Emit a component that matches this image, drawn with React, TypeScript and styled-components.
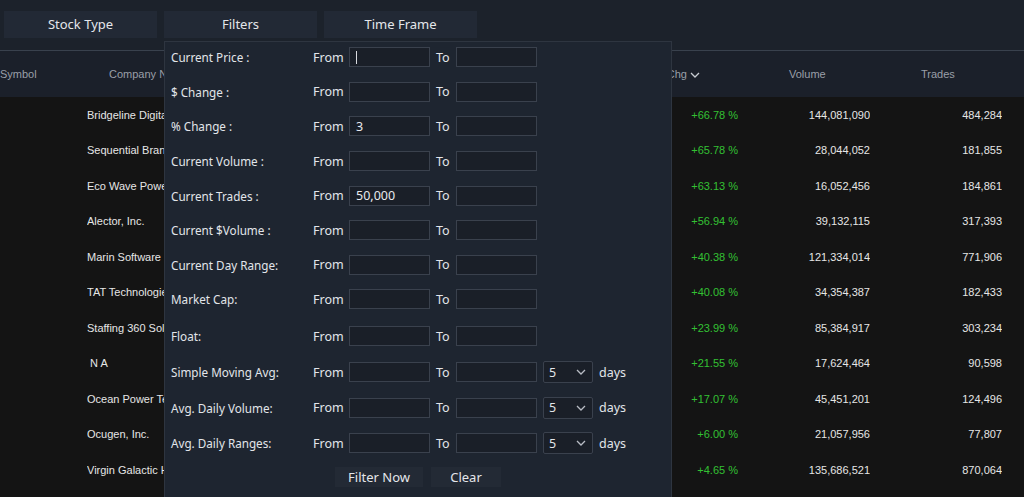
import React from "react";
import styled, { createGlobalStyle } from "styled-components";

const Global = createGlobalStyle`
  html, body { margin: 0; padding: 0; background: #141414; }
  body { width: 1024px; height: 497px; overflow: hidden; font-family: "Liberation Sans", Arial, sans-serif; }
  * { box-sizing: border-box; }
`;

const Page = styled.div`
  position: relative;
  width: 1024px;
  height: 497px;
  overflow: hidden;
  background: #141414;
`;

const TopBar = styled.div`
  display: flex;
  gap: 7px;
  height: 51px;
  padding: 11px 0 0 4px;
  background: #1c222b;
  border-bottom: 1px solid #39414d;
`;

const Tab = styled.div`
  width: 153px;
  height: 27px;
  display: flex;
  align-items: center;
  justify-content: center;
  padding-bottom: 2px;
  background: #222935;
  color: #e4e6ea;
  font-family: "Noto Sans", sans-serif;
  font-size: 13px;
`;

const COLS = "87px 77px 393px 181px 132px 132px 22px";

const HeaderRow = styled.div`
  display: grid;
  grid-template-columns: ${COLS};
  height: 46px;
  align-items: center;
  background: #1b202a;
  color: #9a9fa8;
  font-size: 11px;
`;

const HeadCell = styled.div<{ $align?: string; $pl?: number; $pr?: number }>`
  text-align: ${(p) => p.$align || "left"};
  padding-left: ${(p) => p.$pl || 0}px;
  padding-right: ${(p) => p.$pr || 0}px;
  white-space: nowrap;
  overflow: hidden;
`;

const Body = styled.div`
  background: #141414;
`;

const Row = styled.div`
  display: grid;
  grid-template-columns: ${COLS};
  height: 35.5px;
  align-items: center;
  font-size: 11px;
`;

const Cell = styled.div<{ $align?: string; $green?: boolean }>`
  text-align: ${(p) => p.$align || "left"};
  color: ${(p) => (p.$green ? "#33c033" : "#e6e6e6")};
  white-space: nowrap;
  overflow: hidden;
`;

const Panel = styled.div`
  position: absolute;
  left: 164px;
  top: 41px;
  width: 508px;
  height: 470px;
  background: #1e2530;
  border: 1px solid #2e3540;
  padding: 0 0 0 6px;
  font-family: "Noto Sans", sans-serif;
  font-size: 11.7px;
  color: #e2e5ea;
`;

const FormList = styled.div`
  margin-top: -2px;
`;

const FRow = styled.div<{ $h?: number; $mt?: number }>`
  display: flex;
  align-items: center;
  height: ${(p) => p.$h || 34.6}px;
  margin-top: ${(p) => p.$mt || 0}px;
`;

const Label = styled.div`
  width: 142px;
  white-space: nowrap;
`;

const Word = styled.span<{ $w: number }>`
  width: ${(p) => p.$w}px;
  font-size: 12.5px;
`;

const Input = styled.div`
  width: 81px;
  height: 20px;
  background: #1a1f28;
  border: 1px solid #3a414d;
  margin-right: 6px;
  display: flex;
  align-items: center;
  padding-left: 6px;
  font-size: 12.5px;
  color: #e8eaee;
`;

const Caret = styled.span`
  width: 1px;
  height: 13px;
  background: #d8dadf;
`;

const Select = styled.div`
  width: 50px;
  height: 22px;
  background: #1a1f28;
  border: 1px solid #3a414d;
  border-radius: 2px;
  display: flex;
  align-items: center;
  justify-content: space-between;
  padding: 0 6px 0 5px;
  margin-right: 6px;
  font-size: 12.5px;
`;

const Buttons = styled.div`
  display: flex;
  justify-content: center;
  gap: 8px;
  padding-right: 6px;
  height: 33px;
  align-items: center;
`;

const Btn = styled.div<{ $w: number }>`
  width: ${(p) => p.$w}px;
  height: 20px;
  background: #232a35;
  display: flex;
  align-items: center;
  justify-content: center;
  font-size: 13px;
  color: #e4e6ea;
`;

const Chevron = ({ size = 10, color = "#c8ccd2" }: { size?: number; color?: string }) => (
  <svg width={size} height={size * 0.6} viewBox="0 0 10 6" fill="none">
    <path d="M1 1l4 4 4-4" stroke={color} strokeWidth="1.3" />
  </svg>
);

const rows = [
  ["Bridgeline Digital, Inc.", "+66.78 %", "144,081,090", "484,284"],
  ["Sequential Brands Group", "+65.78 %", "28,044,052", "181,855"],
  ["Eco Wave Power Global", "+63.13 %", "16,052,456", "184,861"],
  ["Alector, Inc.", "+56.94 %", "39,132,115", "317,393"],
  ["Marin Software Inc.", "+40.38 %", "121,334,014", "771,906"],
  ["TAT Technologies Ltd.", "+40.08 %", "34,354,387", "182,433"],
  ["Staffing 360 Solutions", "+23.99 %", "85,384,917", "303,234"],
  ["\u00a0N A", "+21.55 %", "17,624,464", "90,598"],
  ["Ocean Power Technologies", "+17.07 %", "45,451,201", "124,496"],
  ["Ocugen, Inc.", "+6.00 %", "21,057,956", "77,807"],
  ["Virgin Galactic Holdings", "+4.65 %", "135,686,521", "870,064"],
];

const filters: { label: string; from?: string; caret?: boolean; days?: boolean; mt?: number }[] = [
  { label: "Current Price :", caret: true },
  { label: "$ Change :" },
  { label: "% Change :", from: "3" },
  { label: "Current Volume :" },
  { label: "Current Trades :", from: "50,000" },
  { label: "Current $Volume :" },
  { label: "Current Day Range:" },
  { label: "Market Cap:" },
  { label: "Float:", mt: 2 },
  { label: "Simple Moving Avg:", days: true, mt: 1 },
  { label: "Avg. Daily Volume:", days: true },
  { label: "Avg. Daily Ranges:", days: true },
];

export default function App() {
  return (
    <Page>
      <Global />
      <TopBar>
        <Tab>Stock Type</Tab>
        <Tab>Filters</Tab>
        <Tab>Time Frame</Tab>
      </TopBar>
      <HeaderRow>
        <HeadCell>Symbol</HeadCell>
        <HeadCell $pl={22}>Company Name</HeadCell>
        <HeadCell />
        <HeadCell $align="right" $pr={38}>
          % Chg <Chevron size={10} />
        </HeadCell>
        <HeadCell $pl={51}>Volume</HeadCell>
        <HeadCell $pl={51}>Trades</HeadCell>
        <HeadCell />
      </HeaderRow>
      <Body>
        {rows.map((r) => (
          <Row key={r[0] + r[3]}>
            <Cell />
            <Cell>{r[0]}</Cell>
            <Cell />
            <Cell $align="right" $green>
              {r[1]}
            </Cell>
            <Cell $align="right">{r[2]}</Cell>
            <Cell $align="right">{r[3]}</Cell>
            <Cell />
          </Row>
        ))}
      </Body>
      <Panel>
        <FormList>
          {filters.map((f) => (
            <FRow key={f.label} $h={f.days ? 35.5 : 34.6} $mt={f.mt}>
              <Label>{f.label}</Label>
              <Word $w={36}>From</Word>
              <Input>{f.caret ? <Caret /> : f.from}</Input>
              <Word $w={20}>To</Word>
              <Input />
              {f.days && (
                <>
                  <Select>
                    <span>5</span>
                    <Chevron size={10} color="#b8bcc4" />
                  </Select>
                  <Word $w={40}>days</Word>
                </>
              )}
            </FRow>
          ))}
        </FormList>
        <Buttons>
          <Btn $w={88}>Filter Now</Btn>
          <Btn $w={70}>Clear</Btn>
        </Buttons>
      </Panel>
    </Page>
  );
}
